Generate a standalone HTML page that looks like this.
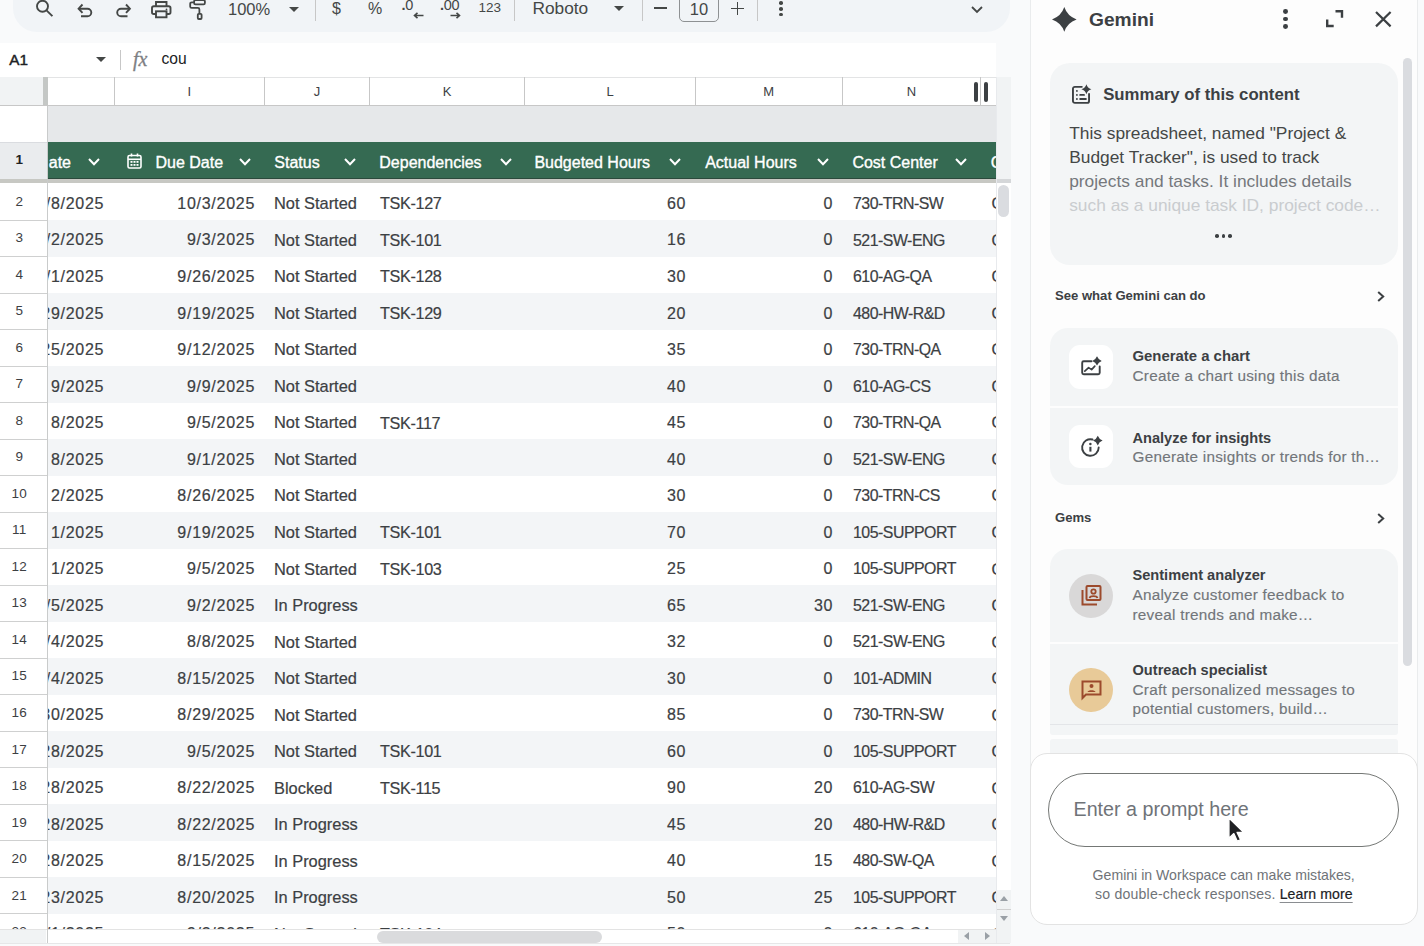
<!DOCTYPE html><html><head><meta charset="utf-8"><style>
*{margin:0;padding:0;box-sizing:border-box}
html,body{width:1424px;height:946px;overflow:hidden;background:#f9fafb;font-family:"Liberation Sans",sans-serif;color:#3c4043}
.a{position:absolute}
.t{position:absolute;white-space:nowrap}
svg{position:absolute;overflow:visible}
</style></head><body><div class="a" style="left:13px;top:-24px;width:997.00px;height:56.00px;border-radius:24px;background:#f1f4f7"></div><svg style="left:30px;top:-2px" width="26" height="22" viewBox="0 0 26 22"><circle cx="12.5" cy="8.3" r="5.5" fill="none" stroke="#444746" stroke-width="1.9"/><path d="M16.5 12.3 L22.4 18.2" stroke="#444746" stroke-width="1.9"/></svg><svg style="left:76px;top:2px" width="20" height="17" viewBox="0 0 20 17"><path d="M3.5 6.7 H11.5 A3.8 3.8 0 0 1 11.5 14.3 H5" fill="none" stroke="#444746" stroke-width="1.9"/><path d="M6.5 2.5 L2.6 6.7 L6.5 10.9" fill="none" stroke="#444746" stroke-width="1.9"/></svg><svg style="left:114px;top:2px" width="20" height="17" viewBox="0 0 20 17"><path d="M15 6.7 H7 A3.8 3.8 0 0 0 7 14.3 H13.5" fill="none" stroke="#444746" stroke-width="1.9"/><path d="M12 2.5 L15.9 6.7 L12 10.9" fill="none" stroke="#444746" stroke-width="1.9"/></svg><svg style="left:150px;top:0px" width="22" height="19" viewBox="0 0 22 19"><path d="M6 6.3 V2 H16.5 V6.3" fill="none" stroke="#444746" stroke-width="1.9"/><rect x="2" y="6.3" width="18.5" height="7.7" rx="1.8" fill="none" stroke="#444746" stroke-width="1.9"/><rect x="6" y="11.3" width="10.5" height="6" fill="#f0f4f9" stroke="#444746" stroke-width="1.9"/><circle cx="16.5" cy="9.3" r="0.9" fill="#444746"/></svg><svg style="left:188px;top:-4px" width="20" height="25" viewBox="0 0 20 25"><rect x="6.1" y="4.2" width="10.8" height="4.2" rx="1.3" fill="none" stroke="#444746" stroke-width="1.8"/><path d="M6.1 6.3 H3.7 A1.5 1.5 0 0 0 2.2 7.8 V10.4 A1.5 1.5 0 0 0 3.7 11.9 H9.9 A1.5 1.5 0 0 1 11.4 13.4 V17.8" fill="none" stroke="#444746" stroke-width="1.8"/><rect x="9.8" y="17.8" width="3.8" height="5.2" rx="1" fill="none" stroke="#444746" stroke-width="1.8"/></svg><div class="t" style="left:228.00px;top:-1.92px;font-size:16.5px;line-height:23px;color:#444746">100%</div><svg style="left:289px;top:6.5px" width="10" height="5" viewBox="0 0 10 5"><path d="M0 0 H10 L5 5z" fill="#444746"/></svg><div class="a" style="left:314.6px;top:0px;width:1.00px;height:21.00px;background:#c7c7c7"></div><div class="a" style="left:513.6px;top:0px;width:1.00px;height:21.00px;background:#c7c7c7"></div><div class="a" style="left:641.6px;top:0px;width:1.00px;height:21.00px;background:#c7c7c7"></div><div class="a" style="left:757.4px;top:0px;width:1.00px;height:21.00px;background:#c7c7c7"></div><div class="t" style="left:332.00px;top:-1.54px;font-size:16px;line-height:22px;color:#444746">$</div><div class="t" style="left:368.00px;top:-1.54px;font-size:16px;line-height:22px;color:#444746">%</div><div class="t" style="left:401.50px;top:-4.82px;font-size:14.5px;line-height:20px;color:#444746;letter-spacing:-0.3px"><b>.</b>0</div><svg style="left:412.5px;top:11.5px" width="11" height="8" viewBox="0 0 11 8"><path d="M10.5 3.5 H1.5 M4.5 0.8 L1.5 3.5 L4.5 6.2" fill="none" stroke="#444746" stroke-width="1.6"/></svg><div class="t" style="left:440.00px;top:-4.82px;font-size:14.5px;line-height:20px;color:#444746;letter-spacing:-0.3px"><b>.</b>00</div><svg style="left:450px;top:11.5px" width="11" height="8" viewBox="0 0 11 8"><path d="M0.5 3.5 H9.5 M6.5 0.8 L9.5 3.5 L6.5 6.2" fill="none" stroke="#444746" stroke-width="1.6"/></svg><div class="t" style="left:478.50px;top:-1.58px;font-size:13.5px;line-height:19px;color:#444746">123</div><div class="t" style="left:532.50px;top:-4.29px;font-size:17.3px;line-height:24px;color:#444746">Roboto</div><svg style="left:614px;top:6px" width="10" height="5" viewBox="0 0 10 5"><path d="M0 0 H10 L5 5z" fill="#444746"/></svg><div class="a" style="left:654px;top:7.3px;width:13.00px;height:1.60px;background:#444746"></div><div class="a" style="left:679px;top:-8px;width:40.00px;height:30.30px;border:1px solid #8e9193;border-radius:5px"></div><div class="t" style="left:679.00px;width:40px;text-align:center;top:-2.22px;font-size:16.5px;line-height:23px;color:#444746">10</div><div class="a" style="left:731px;top:7.5px;width:13.00px;height:1.60px;background:#444746"></div><div class="a" style="left:736.7px;top:2px;width:1.60px;height:12.50px;background:#444746"></div><div class="a" style="left:779.3px;top:1.2px;width:3.6px;height:3.6px;border-radius:50%;background:#444746"></div><div class="a" style="left:779.3px;top:7.000000000000001px;width:3.6px;height:3.6px;border-radius:50%;background:#444746"></div><div class="a" style="left:779.3px;top:12.7px;width:3.6px;height:3.6px;border-radius:50%;background:#444746"></div><svg style="left:971px;top:6px" width="12" height="7" viewBox="0 0 12 7"><path d="M1 1 L6 6 L11 1" fill="none" stroke="#444746" stroke-width="1.8"/></svg><div class="a" style="left:0px;top:43px;width:996.00px;height:34.00px;background:#fff"></div><div class="t" style="left:9.30px;top:49.00px;font-size:15.3px;line-height:21px;color:#202124;-webkit-text-stroke:0.45px #202124">A1</div><svg style="left:96px;top:57px" width="10" height="5" viewBox="0 0 10 5"><path d="M0 0 H10 L5 5z" fill="#444746"/></svg><div class="a" style="left:120px;top:50px;width:1.00px;height:20.00px;background:#c7c7c7"></div><div class="t" style="left:133.00px;top:45.07px;font-size:20px;line-height:28px;color:#7d8084;font-family:'Liberation Serif',serif;font-style:italic;-webkit-text-stroke:0.3px #7d8084">fx</div><div class="t" style="left:161.50px;top:48.39px;font-size:15.6px;line-height:22px;color:#202124">cou</div><div class="a" style="left:0px;top:77px;width:996.00px;height:866.00px;background:#fff"></div><div class="a" style="left:0px;top:76.5px;width:1010.50px;height:1.00px;background:#e3e4e5"></div><div class="a" style="left:0px;top:77px;width:43.00px;height:28.50px;background:#f1f3f4"></div><div class="a" style="left:43px;top:77px;width:4.50px;height:28.50px;background:#c4c7c5"></div><div class="t" style="left:159.20px;width:60px;text-align:center;top:82.50px;font-size:13px;line-height:18px;color:#3c4043">I</div><div class="t" style="left:286.95px;width:60px;text-align:center;top:82.50px;font-size:13px;line-height:18px;color:#3c4043">J</div><div class="t" style="left:417.20px;width:60px;text-align:center;top:82.50px;font-size:13px;line-height:18px;color:#3c4043">K</div><div class="t" style="left:580.05px;width:60px;text-align:center;top:82.50px;font-size:13px;line-height:18px;color:#3c4043">L</div><div class="t" style="left:738.75px;width:60px;text-align:center;top:82.50px;font-size:13px;line-height:18px;color:#3c4043">M</div><div class="t" style="left:881.55px;width:60px;text-align:center;top:82.50px;font-size:13px;line-height:18px;color:#3c4043">N</div><div class="a" style="left:113.5px;top:77px;width:1.00px;height:28.50px;background:#c7c7c7"></div><div class="a" style="left:263.9px;top:77px;width:1.00px;height:28.50px;background:#c7c7c7"></div><div class="a" style="left:369.0px;top:77px;width:1.00px;height:28.50px;background:#c7c7c7"></div><div class="a" style="left:524.4px;top:77px;width:1.00px;height:28.50px;background:#c7c7c7"></div><div class="a" style="left:694.7px;top:77px;width:1.00px;height:28.50px;background:#c7c7c7"></div><div class="a" style="left:841.8px;top:77px;width:1.00px;height:28.50px;background:#c7c7c7"></div><div class="a" style="left:980.3px;top:77px;width:1.00px;height:28.50px;background:#c7c7c7"></div><div class="a" style="left:0px;top:105px;width:996.00px;height:1.00px;background:#c7c7c7"></div><div class="a" style="left:974.3px;top:82px;width:3.80px;height:19.50px;background:#3c4043;border-radius:2px"></div><div class="a" style="left:983.8px;top:82px;width:4.20px;height:19.50px;background:#3c4043;border-radius:2px"></div><div class="a" style="left:47.5px;top:106px;width:948.50px;height:36.30px;background:#e6e8ea"></div><div class="a" style="left:47.5px;top:142.3px;width:948.50px;height:36.10px;background:#356a52"></div><div class="a" style="left:47.5px;top:177.6px;width:948.50px;height:1.40px;background:#2b4a3c"></div><div class="a" style="left:0px;top:179px;width:996.00px;height:4.40px;background:#c7c8c3"></div><div class="a" style="left:0px;top:142.3px;width:47.00px;height:36.70px;background:#eaecee"></div><div class="a" style="left:0px;top:141.8px;width:47.00px;height:1.00px;background:#dadce0"></div><div class="t" style="left:4.30px;width:30px;text-align:center;top:150.32px;font-size:13.5px;line-height:19px;color:#202124;font-weight:bold">1</div><div class="a" style="left:47.5px;top:142.3px;width:948.5px;height:35.3px;overflow:hidden"><div class="t" style="left:-176.50px;width:200px;text-align:right;top:9.56px;font-size:16px;line-height:22px;color:#fff;-webkit-text-stroke:0.35px #fff">ate</div><svg style="left:40.0px;top:16.099999999999994px" width="12" height="8" viewBox="0 0 12 8"><path d="M1 1 L6 6.2 L11 1" fill="none" stroke="#fff" stroke-width="2"/></svg><svg style="left:79.2px;top:11.0px" width="15" height="16" viewBox="0 0 15 16"><rect x="1" y="2.5" width="13" height="12.5" rx="1.5" fill="none" stroke="#fff" stroke-width="1.6"/><path d="M1 6.3h13" stroke="#fff" stroke-width="1.6"/><path d="M4.5 0.5v3M10.5 0.5v3" stroke="#fff" stroke-width="1.6"/><g fill="#fff"><rect x="3.5" y="8" width="2" height="1.8"/><rect x="6.5" y="8" width="2" height="1.8"/><rect x="9.5" y="8" width="2" height="1.8"/><rect x="3.5" y="11" width="2" height="1.8"/><rect x="6.5" y="11" width="2" height="1.8"/><rect x="9.5" y="11" width="2" height="1.8"/></g></svg><div class="t" style="left:108.00px;top:9.56px;font-size:16px;line-height:22px;color:#fff;-webkit-text-stroke:0.35px #fff">Due Date</div><svg style="left:191.1px;top:16.099999999999994px" width="12" height="8" viewBox="0 0 12 8"><path d="M1 1 L6 6.2 L11 1" fill="none" stroke="#fff" stroke-width="2"/></svg><div class="t" style="left:226.80px;top:9.56px;font-size:16px;line-height:22px;color:#fff;-webkit-text-stroke:0.35px #fff">Status</div><svg style="left:296.1px;top:16.099999999999994px" width="12" height="8" viewBox="0 0 12 8"><path d="M1 1 L6 6.2 L11 1" fill="none" stroke="#fff" stroke-width="2"/></svg><div class="t" style="left:331.80px;top:9.56px;font-size:16px;line-height:22px;color:#fff;-webkit-text-stroke:0.35px #fff">Dependencies</div><svg style="left:452.0px;top:16.099999999999994px" width="12" height="8" viewBox="0 0 12 8"><path d="M1 1 L6 6.2 L11 1" fill="none" stroke="#fff" stroke-width="2"/></svg><div class="t" style="left:486.90px;top:9.56px;font-size:16px;line-height:22px;color:#fff;-webkit-text-stroke:0.35px #fff">Budgeted Hours</div><svg style="left:621.5px;top:16.099999999999994px" width="12" height="8" viewBox="0 0 12 8"><path d="M1 1 L6 6.2 L11 1" fill="none" stroke="#fff" stroke-width="2"/></svg><div class="t" style="left:657.70px;top:9.56px;font-size:16px;line-height:22px;color:#fff;-webkit-text-stroke:0.35px #fff">Actual Hours</div><svg style="left:769.0px;top:16.099999999999994px" width="12" height="8" viewBox="0 0 12 8"><path d="M1 1 L6 6.2 L11 1" fill="none" stroke="#fff" stroke-width="2"/></svg><div class="t" style="left:804.90px;top:9.56px;font-size:16px;line-height:22px;color:#fff;-webkit-text-stroke:0.35px #fff">Cost Center</div><svg style="left:907.7px;top:16.099999999999994px" width="12" height="8" viewBox="0 0 12 8"><path d="M1 1 L6 6.2 L11 1" fill="none" stroke="#fff" stroke-width="2"/></svg><div class="t" style="left:943.30px;top:9.56px;font-size:16px;line-height:22px;color:#fff;-webkit-text-stroke:0.35px #fff">Category</div></div><div class="a" style="left:47.5px;top:183.4px;width:948.5px;height:745.6px;overflow:hidden"><div class="a" style="left:0px;top:0.09999999999999432px;width:948.50px;height:36.52px;background:#ffffff"></div><div class="t" style="left:-143.28px;width:200px;text-align:right;top:9.56px;font-size:16px;line-height:22px;color:#3c4043;letter-spacing:0.72px;-webkit-text-stroke:0.2px #3c4043">9/8/2025</div><div class="t" style="left:7.52px;width:200px;text-align:right;top:9.56px;font-size:16px;line-height:22px;color:#3c4043;letter-spacing:0.72px;-webkit-text-stroke:0.2px #3c4043">10/3/2025</div><div class="t" style="left:226.50px;top:8.92px;font-size:16.4px;line-height:23px;color:#3c4043;-webkit-text-stroke:0.2px #3c4043">Not Started</div><div class="t" style="left:332.50px;top:8.99px;font-size:16.2px;line-height:23px;color:#3c4043;-webkit-text-stroke:0.2px #3c4043;letter-spacing:-0.35px">TSK-127</div><div class="t" style="left:438.72px;width:200px;text-align:right;top:9.56px;font-size:16px;line-height:22px;color:#3c4043;letter-spacing:0.72px;-webkit-text-stroke:0.2px #3c4043">60</div><div class="t" style="left:585.72px;width:200px;text-align:right;top:9.56px;font-size:16px;line-height:22px;color:#3c4043;letter-spacing:0.72px;-webkit-text-stroke:0.2px #3c4043">0</div><div class="t" style="left:805.50px;top:9.59px;font-size:15.9px;line-height:22px;color:#3c4043;-webkit-text-stroke:0.2px #3c4043;letter-spacing:-0.5px">730-TRN-SW</div><div class="t" style="left:944.00px;top:8.92px;font-size:16.4px;line-height:23px;color:#3c4043;-webkit-text-stroke:0.2px #3c4043">Ops</div><div class="a" style="left:0px;top:36.620000000000005px;width:948.50px;height:36.52px;background:#f3f5f7"></div><div class="t" style="left:-143.28px;width:200px;text-align:right;top:46.08px;font-size:16px;line-height:22px;color:#3c4043;letter-spacing:0.72px;-webkit-text-stroke:0.2px #3c4043">9/2/2025</div><div class="t" style="left:7.52px;width:200px;text-align:right;top:46.08px;font-size:16px;line-height:22px;color:#3c4043;letter-spacing:0.72px;-webkit-text-stroke:0.2px #3c4043">9/3/2025</div><div class="t" style="left:226.50px;top:45.44px;font-size:16.4px;line-height:23px;color:#3c4043;-webkit-text-stroke:0.2px #3c4043">Not Started</div><div class="t" style="left:332.50px;top:45.51px;font-size:16.2px;line-height:23px;color:#3c4043;-webkit-text-stroke:0.2px #3c4043;letter-spacing:-0.35px">TSK-101</div><div class="t" style="left:438.72px;width:200px;text-align:right;top:46.08px;font-size:16px;line-height:22px;color:#3c4043;letter-spacing:0.72px;-webkit-text-stroke:0.2px #3c4043">16</div><div class="t" style="left:585.72px;width:200px;text-align:right;top:46.08px;font-size:16px;line-height:22px;color:#3c4043;letter-spacing:0.72px;-webkit-text-stroke:0.2px #3c4043">0</div><div class="t" style="left:805.50px;top:46.11px;font-size:15.9px;line-height:22px;color:#3c4043;-webkit-text-stroke:0.2px #3c4043;letter-spacing:-0.5px">521-SW-ENG</div><div class="t" style="left:944.00px;top:45.44px;font-size:16.4px;line-height:23px;color:#3c4043;-webkit-text-stroke:0.2px #3c4043">Ops</div><div class="a" style="left:0px;top:73.14000000000001px;width:948.50px;height:36.52px;background:#ffffff"></div><div class="t" style="left:-143.28px;width:200px;text-align:right;top:82.60px;font-size:16px;line-height:22px;color:#3c4043;letter-spacing:0.72px;-webkit-text-stroke:0.2px #3c4043">9/1/2025</div><div class="t" style="left:7.52px;width:200px;text-align:right;top:82.60px;font-size:16px;line-height:22px;color:#3c4043;letter-spacing:0.72px;-webkit-text-stroke:0.2px #3c4043">9/26/2025</div><div class="t" style="left:226.50px;top:81.96px;font-size:16.4px;line-height:23px;color:#3c4043;-webkit-text-stroke:0.2px #3c4043">Not Started</div><div class="t" style="left:332.50px;top:82.03px;font-size:16.2px;line-height:23px;color:#3c4043;-webkit-text-stroke:0.2px #3c4043;letter-spacing:-0.35px">TSK-128</div><div class="t" style="left:438.72px;width:200px;text-align:right;top:82.60px;font-size:16px;line-height:22px;color:#3c4043;letter-spacing:0.72px;-webkit-text-stroke:0.2px #3c4043">30</div><div class="t" style="left:585.72px;width:200px;text-align:right;top:82.60px;font-size:16px;line-height:22px;color:#3c4043;letter-spacing:0.72px;-webkit-text-stroke:0.2px #3c4043">0</div><div class="t" style="left:805.50px;top:82.63px;font-size:15.9px;line-height:22px;color:#3c4043;-webkit-text-stroke:0.2px #3c4043;letter-spacing:-0.5px">610-AG-QA</div><div class="t" style="left:944.00px;top:81.96px;font-size:16.4px;line-height:23px;color:#3c4043;-webkit-text-stroke:0.2px #3c4043">Ops</div><div class="a" style="left:0px;top:109.66px;width:948.50px;height:36.52px;background:#f3f5f7"></div><div class="t" style="left:-143.28px;width:200px;text-align:right;top:119.12px;font-size:16px;line-height:22px;color:#3c4043;letter-spacing:0.72px;-webkit-text-stroke:0.2px #3c4043">8/29/2025</div><div class="t" style="left:7.52px;width:200px;text-align:right;top:119.12px;font-size:16px;line-height:22px;color:#3c4043;letter-spacing:0.72px;-webkit-text-stroke:0.2px #3c4043">9/19/2025</div><div class="t" style="left:226.50px;top:118.48px;font-size:16.4px;line-height:23px;color:#3c4043;-webkit-text-stroke:0.2px #3c4043">Not Started</div><div class="t" style="left:332.50px;top:118.55px;font-size:16.2px;line-height:23px;color:#3c4043;-webkit-text-stroke:0.2px #3c4043;letter-spacing:-0.35px">TSK-129</div><div class="t" style="left:438.72px;width:200px;text-align:right;top:119.12px;font-size:16px;line-height:22px;color:#3c4043;letter-spacing:0.72px;-webkit-text-stroke:0.2px #3c4043">20</div><div class="t" style="left:585.72px;width:200px;text-align:right;top:119.12px;font-size:16px;line-height:22px;color:#3c4043;letter-spacing:0.72px;-webkit-text-stroke:0.2px #3c4043">0</div><div class="t" style="left:805.50px;top:119.15px;font-size:15.9px;line-height:22px;color:#3c4043;-webkit-text-stroke:0.2px #3c4043;letter-spacing:-0.5px">480-HW-R&amp;D</div><div class="t" style="left:944.00px;top:118.48px;font-size:16.4px;line-height:23px;color:#3c4043;-webkit-text-stroke:0.2px #3c4043">Ops</div><div class="a" style="left:0px;top:146.18000000000004px;width:948.50px;height:36.52px;background:#ffffff"></div><div class="t" style="left:-143.28px;width:200px;text-align:right;top:155.64px;font-size:16px;line-height:22px;color:#3c4043;letter-spacing:0.72px;-webkit-text-stroke:0.2px #3c4043">8/25/2025</div><div class="t" style="left:7.52px;width:200px;text-align:right;top:155.64px;font-size:16px;line-height:22px;color:#3c4043;letter-spacing:0.72px;-webkit-text-stroke:0.2px #3c4043">9/12/2025</div><div class="t" style="left:226.50px;top:155.00px;font-size:16.4px;line-height:23px;color:#3c4043;-webkit-text-stroke:0.2px #3c4043">Not Started</div><div class="t" style="left:438.72px;width:200px;text-align:right;top:155.64px;font-size:16px;line-height:22px;color:#3c4043;letter-spacing:0.72px;-webkit-text-stroke:0.2px #3c4043">35</div><div class="t" style="left:585.72px;width:200px;text-align:right;top:155.64px;font-size:16px;line-height:22px;color:#3c4043;letter-spacing:0.72px;-webkit-text-stroke:0.2px #3c4043">0</div><div class="t" style="left:805.50px;top:155.67px;font-size:15.9px;line-height:22px;color:#3c4043;-webkit-text-stroke:0.2px #3c4043;letter-spacing:-0.5px">730-TRN-QA</div><div class="t" style="left:944.00px;top:155.00px;font-size:16.4px;line-height:23px;color:#3c4043;-webkit-text-stroke:0.2px #3c4043">Ops</div><div class="a" style="left:0px;top:182.70000000000002px;width:948.50px;height:36.52px;background:#f3f5f7"></div><div class="t" style="left:-143.28px;width:200px;text-align:right;top:192.16px;font-size:16px;line-height:22px;color:#3c4043;letter-spacing:0.72px;-webkit-text-stroke:0.2px #3c4043">9/2025</div><div class="t" style="left:7.52px;width:200px;text-align:right;top:192.16px;font-size:16px;line-height:22px;color:#3c4043;letter-spacing:0.72px;-webkit-text-stroke:0.2px #3c4043">9/9/2025</div><div class="t" style="left:226.50px;top:191.52px;font-size:16.4px;line-height:23px;color:#3c4043;-webkit-text-stroke:0.2px #3c4043">Not Started</div><div class="t" style="left:438.72px;width:200px;text-align:right;top:192.16px;font-size:16px;line-height:22px;color:#3c4043;letter-spacing:0.72px;-webkit-text-stroke:0.2px #3c4043">40</div><div class="t" style="left:585.72px;width:200px;text-align:right;top:192.16px;font-size:16px;line-height:22px;color:#3c4043;letter-spacing:0.72px;-webkit-text-stroke:0.2px #3c4043">0</div><div class="t" style="left:805.50px;top:192.19px;font-size:15.9px;line-height:22px;color:#3c4043;-webkit-text-stroke:0.2px #3c4043;letter-spacing:-0.5px">610-AG-CS</div><div class="t" style="left:944.00px;top:191.52px;font-size:16.4px;line-height:23px;color:#3c4043;-webkit-text-stroke:0.2px #3c4043">Ops</div><div class="a" style="left:0px;top:219.22px;width:948.50px;height:36.52px;background:#ffffff"></div><div class="t" style="left:-143.28px;width:200px;text-align:right;top:228.68px;font-size:16px;line-height:22px;color:#3c4043;letter-spacing:0.72px;-webkit-text-stroke:0.2px #3c4043">8/2025</div><div class="t" style="left:7.52px;width:200px;text-align:right;top:228.68px;font-size:16px;line-height:22px;color:#3c4043;letter-spacing:0.72px;-webkit-text-stroke:0.2px #3c4043">9/5/2025</div><div class="t" style="left:226.50px;top:228.04px;font-size:16.4px;line-height:23px;color:#3c4043;-webkit-text-stroke:0.2px #3c4043">Not Started</div><div class="t" style="left:332.50px;top:228.11px;font-size:16.2px;line-height:23px;color:#3c4043;-webkit-text-stroke:0.2px #3c4043;letter-spacing:-0.35px">TSK-117</div><div class="t" style="left:438.72px;width:200px;text-align:right;top:228.68px;font-size:16px;line-height:22px;color:#3c4043;letter-spacing:0.72px;-webkit-text-stroke:0.2px #3c4043">45</div><div class="t" style="left:585.72px;width:200px;text-align:right;top:228.68px;font-size:16px;line-height:22px;color:#3c4043;letter-spacing:0.72px;-webkit-text-stroke:0.2px #3c4043">0</div><div class="t" style="left:805.50px;top:228.71px;font-size:15.9px;line-height:22px;color:#3c4043;-webkit-text-stroke:0.2px #3c4043;letter-spacing:-0.5px">730-TRN-QA</div><div class="t" style="left:944.00px;top:228.04px;font-size:16.4px;line-height:23px;color:#3c4043;-webkit-text-stroke:0.2px #3c4043">Ops</div><div class="a" style="left:0px;top:255.73999999999998px;width:948.50px;height:36.52px;background:#f3f5f7"></div><div class="t" style="left:-143.28px;width:200px;text-align:right;top:265.20px;font-size:16px;line-height:22px;color:#3c4043;letter-spacing:0.72px;-webkit-text-stroke:0.2px #3c4043">8/2025</div><div class="t" style="left:7.52px;width:200px;text-align:right;top:265.20px;font-size:16px;line-height:22px;color:#3c4043;letter-spacing:0.72px;-webkit-text-stroke:0.2px #3c4043">9/1/2025</div><div class="t" style="left:226.50px;top:264.56px;font-size:16.4px;line-height:23px;color:#3c4043;-webkit-text-stroke:0.2px #3c4043">Not Started</div><div class="t" style="left:438.72px;width:200px;text-align:right;top:265.20px;font-size:16px;line-height:22px;color:#3c4043;letter-spacing:0.72px;-webkit-text-stroke:0.2px #3c4043">40</div><div class="t" style="left:585.72px;width:200px;text-align:right;top:265.20px;font-size:16px;line-height:22px;color:#3c4043;letter-spacing:0.72px;-webkit-text-stroke:0.2px #3c4043">0</div><div class="t" style="left:805.50px;top:265.23px;font-size:15.9px;line-height:22px;color:#3c4043;-webkit-text-stroke:0.2px #3c4043;letter-spacing:-0.5px">521-SW-ENG</div><div class="t" style="left:944.00px;top:264.56px;font-size:16.4px;line-height:23px;color:#3c4043;-webkit-text-stroke:0.2px #3c4043">Ops</div><div class="a" style="left:0px;top:292.26px;width:948.50px;height:36.52px;background:#ffffff"></div><div class="t" style="left:-143.28px;width:200px;text-align:right;top:301.72px;font-size:16px;line-height:22px;color:#3c4043;letter-spacing:0.72px;-webkit-text-stroke:0.2px #3c4043">2/2025</div><div class="t" style="left:7.52px;width:200px;text-align:right;top:301.72px;font-size:16px;line-height:22px;color:#3c4043;letter-spacing:0.72px;-webkit-text-stroke:0.2px #3c4043">8/26/2025</div><div class="t" style="left:226.50px;top:301.08px;font-size:16.4px;line-height:23px;color:#3c4043;-webkit-text-stroke:0.2px #3c4043">Not Started</div><div class="t" style="left:438.72px;width:200px;text-align:right;top:301.72px;font-size:16px;line-height:22px;color:#3c4043;letter-spacing:0.72px;-webkit-text-stroke:0.2px #3c4043">30</div><div class="t" style="left:585.72px;width:200px;text-align:right;top:301.72px;font-size:16px;line-height:22px;color:#3c4043;letter-spacing:0.72px;-webkit-text-stroke:0.2px #3c4043">0</div><div class="t" style="left:805.50px;top:301.75px;font-size:15.9px;line-height:22px;color:#3c4043;-webkit-text-stroke:0.2px #3c4043;letter-spacing:-0.5px">730-TRN-CS</div><div class="t" style="left:944.00px;top:301.08px;font-size:16.4px;line-height:23px;color:#3c4043;-webkit-text-stroke:0.2px #3c4043">Ops</div><div class="a" style="left:0px;top:328.7800000000001px;width:948.50px;height:36.52px;background:#f3f5f7"></div><div class="t" style="left:-143.28px;width:200px;text-align:right;top:338.24px;font-size:16px;line-height:22px;color:#3c4043;letter-spacing:0.72px;-webkit-text-stroke:0.2px #3c4043">1/2025</div><div class="t" style="left:7.52px;width:200px;text-align:right;top:338.24px;font-size:16px;line-height:22px;color:#3c4043;letter-spacing:0.72px;-webkit-text-stroke:0.2px #3c4043">9/19/2025</div><div class="t" style="left:226.50px;top:337.60px;font-size:16.4px;line-height:23px;color:#3c4043;-webkit-text-stroke:0.2px #3c4043">Not Started</div><div class="t" style="left:332.50px;top:337.67px;font-size:16.2px;line-height:23px;color:#3c4043;-webkit-text-stroke:0.2px #3c4043;letter-spacing:-0.35px">TSK-101</div><div class="t" style="left:438.72px;width:200px;text-align:right;top:338.24px;font-size:16px;line-height:22px;color:#3c4043;letter-spacing:0.72px;-webkit-text-stroke:0.2px #3c4043">70</div><div class="t" style="left:585.72px;width:200px;text-align:right;top:338.24px;font-size:16px;line-height:22px;color:#3c4043;letter-spacing:0.72px;-webkit-text-stroke:0.2px #3c4043">0</div><div class="t" style="left:805.50px;top:338.27px;font-size:15.9px;line-height:22px;color:#3c4043;-webkit-text-stroke:0.2px #3c4043;letter-spacing:-0.5px">105-SUPPORT</div><div class="t" style="left:944.00px;top:337.60px;font-size:16.4px;line-height:23px;color:#3c4043;-webkit-text-stroke:0.2px #3c4043">Ops</div><div class="a" style="left:0px;top:365.30000000000007px;width:948.50px;height:36.52px;background:#ffffff"></div><div class="t" style="left:-143.28px;width:200px;text-align:right;top:374.76px;font-size:16px;line-height:22px;color:#3c4043;letter-spacing:0.72px;-webkit-text-stroke:0.2px #3c4043">1/2025</div><div class="t" style="left:7.52px;width:200px;text-align:right;top:374.76px;font-size:16px;line-height:22px;color:#3c4043;letter-spacing:0.72px;-webkit-text-stroke:0.2px #3c4043">9/5/2025</div><div class="t" style="left:226.50px;top:374.12px;font-size:16.4px;line-height:23px;color:#3c4043;-webkit-text-stroke:0.2px #3c4043">Not Started</div><div class="t" style="left:332.50px;top:374.19px;font-size:16.2px;line-height:23px;color:#3c4043;-webkit-text-stroke:0.2px #3c4043;letter-spacing:-0.35px">TSK-103</div><div class="t" style="left:438.72px;width:200px;text-align:right;top:374.76px;font-size:16px;line-height:22px;color:#3c4043;letter-spacing:0.72px;-webkit-text-stroke:0.2px #3c4043">25</div><div class="t" style="left:585.72px;width:200px;text-align:right;top:374.76px;font-size:16px;line-height:22px;color:#3c4043;letter-spacing:0.72px;-webkit-text-stroke:0.2px #3c4043">0</div><div class="t" style="left:805.50px;top:374.79px;font-size:15.9px;line-height:22px;color:#3c4043;-webkit-text-stroke:0.2px #3c4043;letter-spacing:-0.5px">105-SUPPORT</div><div class="t" style="left:944.00px;top:374.12px;font-size:16.4px;line-height:23px;color:#3c4043;-webkit-text-stroke:0.2px #3c4043">Ops</div><div class="a" style="left:0px;top:401.82000000000005px;width:948.50px;height:36.52px;background:#f3f5f7"></div><div class="t" style="left:-143.28px;width:200px;text-align:right;top:411.28px;font-size:16px;line-height:22px;color:#3c4043;letter-spacing:0.72px;-webkit-text-stroke:0.2px #3c4043">8/5/2025</div><div class="t" style="left:7.52px;width:200px;text-align:right;top:411.28px;font-size:16px;line-height:22px;color:#3c4043;letter-spacing:0.72px;-webkit-text-stroke:0.2px #3c4043">9/2/2025</div><div class="t" style="left:226.50px;top:410.64px;font-size:16.4px;line-height:23px;color:#3c4043;-webkit-text-stroke:0.2px #3c4043">In Progress</div><div class="t" style="left:438.72px;width:200px;text-align:right;top:411.28px;font-size:16px;line-height:22px;color:#3c4043;letter-spacing:0.72px;-webkit-text-stroke:0.2px #3c4043">65</div><div class="t" style="left:585.72px;width:200px;text-align:right;top:411.28px;font-size:16px;line-height:22px;color:#3c4043;letter-spacing:0.72px;-webkit-text-stroke:0.2px #3c4043">30</div><div class="t" style="left:805.50px;top:411.31px;font-size:15.9px;line-height:22px;color:#3c4043;-webkit-text-stroke:0.2px #3c4043;letter-spacing:-0.5px">521-SW-ENG</div><div class="t" style="left:944.00px;top:410.64px;font-size:16.4px;line-height:23px;color:#3c4043;-webkit-text-stroke:0.2px #3c4043">Ops</div><div class="a" style="left:0px;top:438.34000000000003px;width:948.50px;height:36.52px;background:#ffffff"></div><div class="t" style="left:-143.28px;width:200px;text-align:right;top:447.80px;font-size:16px;line-height:22px;color:#3c4043;letter-spacing:0.72px;-webkit-text-stroke:0.2px #3c4043">8/4/2025</div><div class="t" style="left:7.52px;width:200px;text-align:right;top:447.80px;font-size:16px;line-height:22px;color:#3c4043;letter-spacing:0.72px;-webkit-text-stroke:0.2px #3c4043">8/8/2025</div><div class="t" style="left:226.50px;top:447.16px;font-size:16.4px;line-height:23px;color:#3c4043;-webkit-text-stroke:0.2px #3c4043">Not Started</div><div class="t" style="left:438.72px;width:200px;text-align:right;top:447.80px;font-size:16px;line-height:22px;color:#3c4043;letter-spacing:0.72px;-webkit-text-stroke:0.2px #3c4043">32</div><div class="t" style="left:585.72px;width:200px;text-align:right;top:447.80px;font-size:16px;line-height:22px;color:#3c4043;letter-spacing:0.72px;-webkit-text-stroke:0.2px #3c4043">0</div><div class="t" style="left:805.50px;top:447.83px;font-size:15.9px;line-height:22px;color:#3c4043;-webkit-text-stroke:0.2px #3c4043;letter-spacing:-0.5px">521-SW-ENG</div><div class="t" style="left:944.00px;top:447.16px;font-size:16.4px;line-height:23px;color:#3c4043;-webkit-text-stroke:0.2px #3c4043">Ops</div><div class="a" style="left:0px;top:474.86px;width:948.50px;height:36.52px;background:#f3f5f7"></div><div class="t" style="left:-143.28px;width:200px;text-align:right;top:484.32px;font-size:16px;line-height:22px;color:#3c4043;letter-spacing:0.72px;-webkit-text-stroke:0.2px #3c4043">8/4/2025</div><div class="t" style="left:7.52px;width:200px;text-align:right;top:484.32px;font-size:16px;line-height:22px;color:#3c4043;letter-spacing:0.72px;-webkit-text-stroke:0.2px #3c4043">8/15/2025</div><div class="t" style="left:226.50px;top:483.68px;font-size:16.4px;line-height:23px;color:#3c4043;-webkit-text-stroke:0.2px #3c4043">Not Started</div><div class="t" style="left:438.72px;width:200px;text-align:right;top:484.32px;font-size:16px;line-height:22px;color:#3c4043;letter-spacing:0.72px;-webkit-text-stroke:0.2px #3c4043">30</div><div class="t" style="left:585.72px;width:200px;text-align:right;top:484.32px;font-size:16px;line-height:22px;color:#3c4043;letter-spacing:0.72px;-webkit-text-stroke:0.2px #3c4043">0</div><div class="t" style="left:805.50px;top:484.35px;font-size:15.9px;line-height:22px;color:#3c4043;-webkit-text-stroke:0.2px #3c4043;letter-spacing:-0.5px">101-ADMIN</div><div class="t" style="left:944.00px;top:483.68px;font-size:16.4px;line-height:23px;color:#3c4043;-webkit-text-stroke:0.2px #3c4043">Ops</div><div class="a" style="left:0px;top:511.38px;width:948.50px;height:36.52px;background:#ffffff"></div><div class="t" style="left:-143.28px;width:200px;text-align:right;top:520.84px;font-size:16px;line-height:22px;color:#3c4043;letter-spacing:0.72px;-webkit-text-stroke:0.2px #3c4043">7/30/2025</div><div class="t" style="left:7.52px;width:200px;text-align:right;top:520.84px;font-size:16px;line-height:22px;color:#3c4043;letter-spacing:0.72px;-webkit-text-stroke:0.2px #3c4043">8/29/2025</div><div class="t" style="left:226.50px;top:520.20px;font-size:16.4px;line-height:23px;color:#3c4043;-webkit-text-stroke:0.2px #3c4043">Not Started</div><div class="t" style="left:438.72px;width:200px;text-align:right;top:520.84px;font-size:16px;line-height:22px;color:#3c4043;letter-spacing:0.72px;-webkit-text-stroke:0.2px #3c4043">85</div><div class="t" style="left:585.72px;width:200px;text-align:right;top:520.84px;font-size:16px;line-height:22px;color:#3c4043;letter-spacing:0.72px;-webkit-text-stroke:0.2px #3c4043">0</div><div class="t" style="left:805.50px;top:520.87px;font-size:15.9px;line-height:22px;color:#3c4043;-webkit-text-stroke:0.2px #3c4043;letter-spacing:-0.5px">730-TRN-SW</div><div class="t" style="left:944.00px;top:520.20px;font-size:16.4px;line-height:23px;color:#3c4043;-webkit-text-stroke:0.2px #3c4043">Ops</div><div class="a" style="left:0px;top:547.9000000000001px;width:948.50px;height:36.52px;background:#f3f5f7"></div><div class="t" style="left:-143.28px;width:200px;text-align:right;top:557.36px;font-size:16px;line-height:22px;color:#3c4043;letter-spacing:0.72px;-webkit-text-stroke:0.2px #3c4043">7/28/2025</div><div class="t" style="left:7.52px;width:200px;text-align:right;top:557.36px;font-size:16px;line-height:22px;color:#3c4043;letter-spacing:0.72px;-webkit-text-stroke:0.2px #3c4043">9/5/2025</div><div class="t" style="left:226.50px;top:556.72px;font-size:16.4px;line-height:23px;color:#3c4043;-webkit-text-stroke:0.2px #3c4043">Not Started</div><div class="t" style="left:332.50px;top:556.79px;font-size:16.2px;line-height:23px;color:#3c4043;-webkit-text-stroke:0.2px #3c4043;letter-spacing:-0.35px">TSK-101</div><div class="t" style="left:438.72px;width:200px;text-align:right;top:557.36px;font-size:16px;line-height:22px;color:#3c4043;letter-spacing:0.72px;-webkit-text-stroke:0.2px #3c4043">60</div><div class="t" style="left:585.72px;width:200px;text-align:right;top:557.36px;font-size:16px;line-height:22px;color:#3c4043;letter-spacing:0.72px;-webkit-text-stroke:0.2px #3c4043">0</div><div class="t" style="left:805.50px;top:557.39px;font-size:15.9px;line-height:22px;color:#3c4043;-webkit-text-stroke:0.2px #3c4043;letter-spacing:-0.5px">105-SUPPORT</div><div class="t" style="left:944.00px;top:556.72px;font-size:16.4px;line-height:23px;color:#3c4043;-webkit-text-stroke:0.2px #3c4043">Ops</div><div class="a" style="left:0px;top:584.4200000000001px;width:948.50px;height:36.52px;background:#ffffff"></div><div class="t" style="left:-143.28px;width:200px;text-align:right;top:593.88px;font-size:16px;line-height:22px;color:#3c4043;letter-spacing:0.72px;-webkit-text-stroke:0.2px #3c4043">7/28/2025</div><div class="t" style="left:7.52px;width:200px;text-align:right;top:593.88px;font-size:16px;line-height:22px;color:#3c4043;letter-spacing:0.72px;-webkit-text-stroke:0.2px #3c4043">8/22/2025</div><div class="t" style="left:226.50px;top:593.24px;font-size:16.4px;line-height:23px;color:#3c4043;-webkit-text-stroke:0.2px #3c4043">Blocked</div><div class="t" style="left:332.50px;top:593.31px;font-size:16.2px;line-height:23px;color:#3c4043;-webkit-text-stroke:0.2px #3c4043;letter-spacing:-0.35px">TSK-115</div><div class="t" style="left:438.72px;width:200px;text-align:right;top:593.88px;font-size:16px;line-height:22px;color:#3c4043;letter-spacing:0.72px;-webkit-text-stroke:0.2px #3c4043">90</div><div class="t" style="left:585.72px;width:200px;text-align:right;top:593.88px;font-size:16px;line-height:22px;color:#3c4043;letter-spacing:0.72px;-webkit-text-stroke:0.2px #3c4043">20</div><div class="t" style="left:805.50px;top:593.91px;font-size:15.9px;line-height:22px;color:#3c4043;-webkit-text-stroke:0.2px #3c4043;letter-spacing:-0.5px">610-AG-SW</div><div class="t" style="left:944.00px;top:593.24px;font-size:16.4px;line-height:23px;color:#3c4043;-webkit-text-stroke:0.2px #3c4043">Ops</div><div class="a" style="left:0px;top:620.94px;width:948.50px;height:36.52px;background:#f3f5f7"></div><div class="t" style="left:-143.28px;width:200px;text-align:right;top:630.40px;font-size:16px;line-height:22px;color:#3c4043;letter-spacing:0.72px;-webkit-text-stroke:0.2px #3c4043">7/28/2025</div><div class="t" style="left:7.52px;width:200px;text-align:right;top:630.40px;font-size:16px;line-height:22px;color:#3c4043;letter-spacing:0.72px;-webkit-text-stroke:0.2px #3c4043">8/22/2025</div><div class="t" style="left:226.50px;top:629.76px;font-size:16.4px;line-height:23px;color:#3c4043;-webkit-text-stroke:0.2px #3c4043">In Progress</div><div class="t" style="left:438.72px;width:200px;text-align:right;top:630.40px;font-size:16px;line-height:22px;color:#3c4043;letter-spacing:0.72px;-webkit-text-stroke:0.2px #3c4043">45</div><div class="t" style="left:585.72px;width:200px;text-align:right;top:630.40px;font-size:16px;line-height:22px;color:#3c4043;letter-spacing:0.72px;-webkit-text-stroke:0.2px #3c4043">20</div><div class="t" style="left:805.50px;top:630.43px;font-size:15.9px;line-height:22px;color:#3c4043;-webkit-text-stroke:0.2px #3c4043;letter-spacing:-0.5px">480-HW-R&amp;D</div><div class="t" style="left:944.00px;top:629.76px;font-size:16.4px;line-height:23px;color:#3c4043;-webkit-text-stroke:0.2px #3c4043">Ops</div><div class="a" style="left:0px;top:657.46px;width:948.50px;height:36.52px;background:#ffffff"></div><div class="t" style="left:-143.28px;width:200px;text-align:right;top:666.92px;font-size:16px;line-height:22px;color:#3c4043;letter-spacing:0.72px;-webkit-text-stroke:0.2px #3c4043">7/28/2025</div><div class="t" style="left:7.52px;width:200px;text-align:right;top:666.92px;font-size:16px;line-height:22px;color:#3c4043;letter-spacing:0.72px;-webkit-text-stroke:0.2px #3c4043">8/15/2025</div><div class="t" style="left:226.50px;top:666.28px;font-size:16.4px;line-height:23px;color:#3c4043;-webkit-text-stroke:0.2px #3c4043">In Progress</div><div class="t" style="left:438.72px;width:200px;text-align:right;top:666.92px;font-size:16px;line-height:22px;color:#3c4043;letter-spacing:0.72px;-webkit-text-stroke:0.2px #3c4043">40</div><div class="t" style="left:585.72px;width:200px;text-align:right;top:666.92px;font-size:16px;line-height:22px;color:#3c4043;letter-spacing:0.72px;-webkit-text-stroke:0.2px #3c4043">15</div><div class="t" style="left:805.50px;top:666.95px;font-size:15.9px;line-height:22px;color:#3c4043;-webkit-text-stroke:0.2px #3c4043;letter-spacing:-0.5px">480-SW-QA</div><div class="t" style="left:944.00px;top:666.28px;font-size:16.4px;line-height:23px;color:#3c4043;-webkit-text-stroke:0.2px #3c4043">Ops</div><div class="a" style="left:0px;top:693.9800000000001px;width:948.50px;height:36.52px;background:#f3f5f7"></div><div class="t" style="left:-143.28px;width:200px;text-align:right;top:703.44px;font-size:16px;line-height:22px;color:#3c4043;letter-spacing:0.72px;-webkit-text-stroke:0.2px #3c4043">7/23/2025</div><div class="t" style="left:7.52px;width:200px;text-align:right;top:703.44px;font-size:16px;line-height:22px;color:#3c4043;letter-spacing:0.72px;-webkit-text-stroke:0.2px #3c4043">8/20/2025</div><div class="t" style="left:226.50px;top:702.80px;font-size:16.4px;line-height:23px;color:#3c4043;-webkit-text-stroke:0.2px #3c4043">In Progress</div><div class="t" style="left:438.72px;width:200px;text-align:right;top:703.44px;font-size:16px;line-height:22px;color:#3c4043;letter-spacing:0.72px;-webkit-text-stroke:0.2px #3c4043">50</div><div class="t" style="left:585.72px;width:200px;text-align:right;top:703.44px;font-size:16px;line-height:22px;color:#3c4043;letter-spacing:0.72px;-webkit-text-stroke:0.2px #3c4043">25</div><div class="t" style="left:805.50px;top:703.47px;font-size:15.9px;line-height:22px;color:#3c4043;-webkit-text-stroke:0.2px #3c4043;letter-spacing:-0.5px">105-SUPPORT</div><div class="t" style="left:944.00px;top:702.80px;font-size:16.4px;line-height:23px;color:#3c4043;-webkit-text-stroke:0.2px #3c4043">Ops</div><div class="a" style="left:0px;top:730.5000000000001px;width:948.50px;height:36.52px;background:#ffffff"></div><div class="t" style="left:-143.28px;width:200px;text-align:right;top:739.96px;font-size:16px;line-height:22px;color:#3c4043;letter-spacing:0.72px;-webkit-text-stroke:0.2px #3c4043">8/1/2025</div><div class="t" style="left:7.52px;width:200px;text-align:right;top:739.96px;font-size:16px;line-height:22px;color:#3c4043;letter-spacing:0.72px;-webkit-text-stroke:0.2px #3c4043">9/3/2025</div><div class="t" style="left:226.50px;top:739.32px;font-size:16.4px;line-height:23px;color:#3c4043;-webkit-text-stroke:0.2px #3c4043">Not Started</div><div class="t" style="left:332.50px;top:739.39px;font-size:16.2px;line-height:23px;color:#3c4043;-webkit-text-stroke:0.2px #3c4043;letter-spacing:-0.35px">TSK-104</div><div class="t" style="left:438.72px;width:200px;text-align:right;top:739.96px;font-size:16px;line-height:22px;color:#3c4043;letter-spacing:0.72px;-webkit-text-stroke:0.2px #3c4043">50</div><div class="t" style="left:585.72px;width:200px;text-align:right;top:739.96px;font-size:16px;line-height:22px;color:#3c4043;letter-spacing:0.72px;-webkit-text-stroke:0.2px #3c4043">0</div><div class="t" style="left:805.50px;top:739.99px;font-size:15.9px;line-height:22px;color:#3c4043;-webkit-text-stroke:0.2px #3c4043;letter-spacing:-0.5px">610-AG-QA</div><div class="t" style="left:944.00px;top:739.32px;font-size:16.4px;line-height:23px;color:#3c4043;-webkit-text-stroke:0.2px #3c4043">Ops</div></div><div class="a" style="left:0;top:183.4px;width:47px;height:745.6px;overflow:hidden;background:#fff"><div class="t" style="left:0.30px;width:38px;text-align:center;top:8.32px;font-size:13.5px;line-height:19px;color:#3c4043;letter-spacing:0.3px">2</div><div class="a" style="left:0px;top:36.12px;width:47.00px;height:1.00px;background:#cfd0d0"></div><div class="t" style="left:0.30px;width:38px;text-align:center;top:44.84px;font-size:13.5px;line-height:19px;color:#3c4043;letter-spacing:0.3px">3</div><div class="a" style="left:0px;top:72.64000000000001px;width:47.00px;height:1.00px;background:#cfd0d0"></div><div class="t" style="left:0.30px;width:38px;text-align:center;top:81.36px;font-size:13.5px;line-height:19px;color:#3c4043;letter-spacing:0.3px">4</div><div class="a" style="left:0px;top:109.16000000000003px;width:47.00px;height:1.00px;background:#cfd0d0"></div><div class="t" style="left:0.30px;width:38px;text-align:center;top:117.88px;font-size:13.5px;line-height:19px;color:#3c4043;letter-spacing:0.3px">5</div><div class="a" style="left:0px;top:145.68px;width:47.00px;height:1.00px;background:#cfd0d0"></div><div class="t" style="left:0.30px;width:38px;text-align:center;top:154.40px;font-size:13.5px;line-height:19px;color:#3c4043;letter-spacing:0.3px">6</div><div class="a" style="left:0px;top:182.20000000000005px;width:47.00px;height:1.00px;background:#cfd0d0"></div><div class="t" style="left:0.30px;width:38px;text-align:center;top:190.92px;font-size:13.5px;line-height:19px;color:#3c4043;letter-spacing:0.3px">7</div><div class="a" style="left:0px;top:218.72000000000003px;width:47.00px;height:1.00px;background:#cfd0d0"></div><div class="t" style="left:0.30px;width:38px;text-align:center;top:227.44px;font-size:13.5px;line-height:19px;color:#3c4043;letter-spacing:0.3px">8</div><div class="a" style="left:0px;top:255.24px;width:47.00px;height:1.00px;background:#cfd0d0"></div><div class="t" style="left:0.30px;width:38px;text-align:center;top:263.96px;font-size:13.5px;line-height:19px;color:#3c4043;letter-spacing:0.3px">9</div><div class="a" style="left:0px;top:291.76px;width:47.00px;height:1.00px;background:#cfd0d0"></div><div class="t" style="left:0.30px;width:38px;text-align:center;top:300.48px;font-size:13.5px;line-height:19px;color:#3c4043;letter-spacing:0.3px">10</div><div class="a" style="left:0px;top:328.28px;width:47.00px;height:1.00px;background:#cfd0d0"></div><div class="t" style="left:0.30px;width:38px;text-align:center;top:337.00px;font-size:13.5px;line-height:19px;color:#3c4043;letter-spacing:0.3px">11</div><div class="a" style="left:0px;top:364.80000000000007px;width:47.00px;height:1.00px;background:#cfd0d0"></div><div class="t" style="left:0.30px;width:38px;text-align:center;top:373.52px;font-size:13.5px;line-height:19px;color:#3c4043;letter-spacing:0.3px">12</div><div class="a" style="left:0px;top:401.32000000000005px;width:47.00px;height:1.00px;background:#cfd0d0"></div><div class="t" style="left:0.30px;width:38px;text-align:center;top:410.04px;font-size:13.5px;line-height:19px;color:#3c4043;letter-spacing:0.3px">13</div><div class="a" style="left:0px;top:437.84000000000003px;width:47.00px;height:1.00px;background:#cfd0d0"></div><div class="t" style="left:0.30px;width:38px;text-align:center;top:446.56px;font-size:13.5px;line-height:19px;color:#3c4043;letter-spacing:0.3px">14</div><div class="a" style="left:0px;top:474.36px;width:47.00px;height:1.00px;background:#cfd0d0"></div><div class="t" style="left:0.30px;width:38px;text-align:center;top:483.08px;font-size:13.5px;line-height:19px;color:#3c4043;letter-spacing:0.3px">15</div><div class="a" style="left:0px;top:510.88px;width:47.00px;height:1.00px;background:#cfd0d0"></div><div class="t" style="left:0.30px;width:38px;text-align:center;top:519.60px;font-size:13.5px;line-height:19px;color:#3c4043;letter-spacing:0.3px">16</div><div class="a" style="left:0px;top:547.4px;width:47.00px;height:1.00px;background:#cfd0d0"></div><div class="t" style="left:0.30px;width:38px;text-align:center;top:556.12px;font-size:13.5px;line-height:19px;color:#3c4043;letter-spacing:0.3px">17</div><div class="a" style="left:0px;top:583.9200000000001px;width:47.00px;height:1.00px;background:#cfd0d0"></div><div class="t" style="left:0.30px;width:38px;text-align:center;top:592.64px;font-size:13.5px;line-height:19px;color:#3c4043;letter-spacing:0.3px">18</div><div class="a" style="left:0px;top:620.44px;width:47.00px;height:1.00px;background:#cfd0d0"></div><div class="t" style="left:0.30px;width:38px;text-align:center;top:629.16px;font-size:13.5px;line-height:19px;color:#3c4043;letter-spacing:0.3px">19</div><div class="a" style="left:0px;top:656.96px;width:47.00px;height:1.00px;background:#cfd0d0"></div><div class="t" style="left:0.30px;width:38px;text-align:center;top:665.68px;font-size:13.5px;line-height:19px;color:#3c4043;letter-spacing:0.3px">20</div><div class="a" style="left:0px;top:693.48px;width:47.00px;height:1.00px;background:#cfd0d0"></div><div class="t" style="left:0.30px;width:38px;text-align:center;top:702.20px;font-size:13.5px;line-height:19px;color:#3c4043;letter-spacing:0.3px">21</div><div class="a" style="left:0px;top:730.0000000000001px;width:47.00px;height:1.00px;background:#cfd0d0"></div><div class="t" style="left:0.30px;width:38px;text-align:center;top:738.72px;font-size:13.5px;line-height:19px;color:#3c4043;letter-spacing:0.3px">22</div><div class="a" style="left:0px;top:766.5200000000001px;width:47.00px;height:1.00px;background:#cfd0d0"></div></div><div class="a" style="left:46.6px;top:106px;width:1.20px;height:837.00px;background:#c9cbcb"></div><div class="a" style="left:0px;top:929px;width:996.00px;height:14.00px;background:#fff"></div><div class="a" style="left:0px;top:928.5px;width:996.00px;height:1.00px;background:#e3e3e3"></div><div class="a" style="left:0px;top:929.5px;width:46.30px;height:13.50px;background:#f1f3f4"></div><div class="a" style="left:377.3px;top:930.6px;width:224.60px;height:12.00px;border-radius:6px;background:#dadbdd"></div><div class="a" style="left:958.2px;top:929.5px;width:37.80px;height:13.50px;background:#f1f3f4"></div><div class="a" style="left:46.6px;top:929px;width:1.20px;height:14.00px;background:#c9cbcb"></div><div class="a" style="left:0px;top:942.5px;width:1010.00px;height:1.00px;background:#e6e7e8"></div><svg style="left:964px;top:932px" width="6" height="8" viewBox="0 0 6 8"><path d="M5 0 V8 L0 4z" fill="#9aa0a6"/></svg><svg style="left:985px;top:932px" width="6" height="8" viewBox="0 0 6 8"><path d="M0 0 V8 L5 4z" fill="#9aa0a6"/></svg><div class="a" style="left:996px;top:77px;width:14.50px;height:102.00px;background:#f1f3f4"></div><div class="a" style="left:996px;top:179px;width:14.50px;height:4.40px;background:#d5d7d9"></div><div class="a" style="left:996px;top:183.4px;width:14.50px;height:759.60px;background:#fff"></div><div class="a" style="left:996px;top:77px;width:1.00px;height:866.00px;background:#e8eaed"></div><div class="a" style="left:998px;top:184.8px;width:11.00px;height:32.30px;border-radius:6px;background:#dadce0"></div><div class="a" style="left:997px;top:890px;width:13.50px;height:53.00px;background:#f1f3f4"></div><div class="a" style="left:997px;top:909px;width:13.50px;height:1.00px;background:#d0d0d0"></div><svg style="left:999.5px;top:896px" width="8" height="5" viewBox="0 0 8 5"><path d="M0 5 H8 L4 0z" fill="#9aa0a6"/></svg><svg style="left:999.5px;top:916px" width="8" height="5" viewBox="0 0 8 5"><path d="M0 0 H8 L4 5z" fill="#9aa0a6"/></svg><div class="a" style="left:1030px;top:-30px;width:388.00px;height:955.00px;background:#fdfdfd;border:1px solid #eaeced;border-radius:0 0 20px 20px"></div><svg style="left:1052.2px;top:7.2px" width="24.6" height="24.8" viewBox="0 0 24 24"><path d="M12 0 Q15 9 24 12 Q15 15 12 24 Q9 15 0 12 Q9 9 12 0z" fill="#3c4043"/></svg><div class="t" style="left:1089.00px;top:5.75px;font-size:19.2px;line-height:27px;color:#3c4043;font-weight:bold">Gemini</div><div class="a" style="left:1283.1px;top:9.2px;width:4.8px;height:4.8px;border-radius:50%;background:#3c4043"></div><div class="a" style="left:1283.1px;top:16.700000000000003px;width:4.8px;height:4.8px;border-radius:50%;background:#3c4043"></div><div class="a" style="left:1283.1px;top:24.1px;width:4.8px;height:4.8px;border-radius:50%;background:#3c4043"></div><svg style="left:1326px;top:10.3px" width="17.2" height="17.2" viewBox="0 0 17.2 17.2"><path d="M9.5 1.2 H16 V7.7 M1.2 9.5 V16 H7.7" fill="none" stroke="#3c4043" stroke-width="2.4"/></svg><svg style="left:1374.6px;top:11px" width="16.6" height="16.4" viewBox="0 0 16.6 16.4"><path d="M1 1 L15.6 15.4 M15.6 1 L1 15.4" fill="none" stroke="#3c4043" stroke-width="2.2"/></svg><div class="a" style="left:1050.4px;top:63px;width:347.50px;height:201.80px;background:#f3f5f6;border-radius:20px"></div><svg style="left:1070px;top:84px" width="24" height="24" viewBox="0 0 24 24"><path d="M11.8 2.85 H4.85 A1.9 1.9 0 0 0 2.95 4.75 V16.95 A1.9 1.9 0 0 0 4.85 18.85 H17.15 A1.9 1.9 0 0 0 19.05 16.95 V10" fill="none" stroke="#3c4043" stroke-width="1.9" stroke-linecap="round"/><path d="M6.9 6.9 h0.01 M6.9 10.9 h0.01 M6.9 15 h0.01 M10.2 10.9 H14 M10.2 15 H15.9" stroke="#3c4043" stroke-width="1.9" stroke-linecap="round"/><path d="M16.4 0.34999999999999964 Q17.5 4.25 21.4 5.35 Q17.5 6.449999999999999 16.4 10.35 Q15.299999999999999 6.449999999999999 11.399999999999999 5.35 Q15.299999999999999 4.25 16.4 0.34999999999999964z" fill="#3c4043"/></svg><div class="t" style="left:1103.20px;top:83.10px;font-size:16.75px;line-height:23px;color:#3c4043;font-weight:bold">Summary of this content</div><div class="t" style="left:1069.20px;top:120.99px;font-size:17.35px;line-height:24px;color:#444746">This spreadsheet, named "Project &amp;</div><div class="t" style="left:1069.20px;top:144.79px;font-size:17.35px;line-height:24px;color:#444746">Budget Tracker", is used to track</div><div class="t" style="left:1069.20px;top:169.19px;font-size:17.35px;line-height:24px;color:#75787c">projects and tasks. It includes details</div><div class="t" style="left:1069.20px;top:192.79px;font-size:17.35px;line-height:24px;color:#c9cccf">such as a unique task ID, project code&#8230;</div><div class="a" style="left:1215.0px;top:234.0px;width:3.6px;height:3.6px;border-radius:50%;background:#3c4043"></div><div class="a" style="left:1221.6000000000001px;top:234.0px;width:3.6px;height:3.6px;border-radius:50%;background:#3c4043"></div><div class="a" style="left:1228.2px;top:234.0px;width:3.6px;height:3.6px;border-radius:50%;background:#3c4043"></div><div class="t" style="left:1055.00px;top:287.26px;font-size:13.1px;line-height:18px;color:#3c4043;font-weight:bold">See what Gemini can do</div><svg style="left:1376.8px;top:291.3px" width="8" height="11" viewBox="0 0 8 11"><path d="M1.2 1 L6.2 5.5 L1.2 10" fill="none" stroke="#3c4043" stroke-width="2"/></svg><div class="a" style="left:1050.1px;top:328.1px;width:347.60px;height:77.60px;background:#f3f5f6;border-radius:18px 18px 0 0"></div><div class="a" style="left:1050.1px;top:407.8px;width:347.60px;height:77.50px;background:#f3f5f6;border-radius:0 0 18px 18px"></div><div class="a" style="left:1069px;top:344.6px;width:43.80px;height:44.20px;background:#fff;border-radius:11px"></div><div class="a" style="left:1069px;top:424.7px;width:43.80px;height:43.70px;background:#fff;border-radius:11px"></div><svg style="left:1080px;top:355px" width="24" height="24" viewBox="0 0 24 24"><path d="M11.5 6.2 H3.7 A1.5 1.5 0 0 0 2.2 7.7 V17.8 A1.5 1.5 0 0 0 3.7 19.3 H18.2 A1.5 1.5 0 0 0 19.7 17.8 V11.5" fill="none" stroke="#3c4043" stroke-width="1.9" stroke-linecap="round"/><path d="M4.8 16.2 L8.6 12.6 L11.6 14.6 L14.8 11.2" fill="none" stroke="#3c4043" stroke-width="1.7" stroke-linecap="round" stroke-linejoin="round"/><path d="M17 1.2000000000000002 Q18.316 4.584 21.7 5.9 Q18.316 7.216000000000001 17 10.600000000000001 Q15.684 7.216000000000001 12.3 5.9 Q15.684 4.584 17 1.2000000000000002z" fill="#3c4043"/></svg><svg style="left:1080px;top:436px" width="24" height="24" viewBox="0 0 24 24"><path d="M12.55 3.5 A8.3 8.3 0 1 0 18.7 11.5" fill="none" stroke="#3c4043" stroke-width="1.9" stroke-linecap="round"/><circle cx="10.4" cy="8.1" r="1.25" fill="#3c4043"/><path d="M10.4 10.8 V15.6" stroke="#3c4043" stroke-width="2.1"/><path d="M17.8 -0.20000000000000018 Q19.144000000000002 3.2559999999999993 22.6 4.6 Q19.144000000000002 5.944 17.8 9.399999999999999 Q16.456 5.944 13.0 4.6 Q16.456 3.2559999999999993 17.8 -0.20000000000000018z" fill="#3c4043"/></svg><div class="t" style="left:1132.50px;top:346.34px;font-size:14.9px;line-height:21px;color:#3c4043;font-weight:bold">Generate a chart</div><div class="t" style="left:1132.50px;top:365.30px;font-size:15.3px;line-height:21px;color:#72767a;letter-spacing:0.25px;-webkit-text-stroke:0.15px #72767a">Create a chart using this data</div><div class="t" style="left:1132.50px;top:427.74px;font-size:14.6px;line-height:20px;color:#3c4043;font-weight:bold">Analyze for insights</div><div class="t" style="left:1132.50px;top:445.60px;font-size:15.3px;line-height:21px;color:#72767a;letter-spacing:0.25px;-webkit-text-stroke:0.15px #72767a">Generate insights or trends for th&#8230;</div><div class="t" style="left:1055.00px;top:508.56px;font-size:13.1px;line-height:18px;color:#3c4043;font-weight:bold">Gems</div><svg style="left:1376.8px;top:512.8px" width="8" height="11" viewBox="0 0 8 11"><path d="M1.2 1 L6.2 5.5 L1.2 10" fill="none" stroke="#3c4043" stroke-width="2"/></svg><div class="a" style="left:1050.2px;top:549px;width:347.80px;height:92.60px;background:#f3f5f6;border-radius:18px 18px 0 0"></div><div class="a" style="left:1050.2px;top:644.1px;width:347.80px;height:80.30px;background:#f3f5f6"></div><div class="a" style="left:1050.2px;top:724.4px;width:347.80px;height:1.00px;background:#e3e5e8"></div><div class="a" style="left:1050.2px;top:725.4px;width:347.80px;height:10.10px;background:#f3f5f6;border-radius:0 0 3px 3px"></div><div class="a" style="left:1050.2px;top:739px;width:347.80px;height:21.00px;background:#f3f5f6;border-radius:3px 3px 0 0"></div><div class="a" style="left:1069.1px;top:573.6px;width:43.80px;height:44.10px;background:#d9d8d8;border-radius:50%"></div><div class="a" style="left:1069.1px;top:667.7px;width:43.80px;height:44.40px;background:#e8ca98;border-radius:50%"></div><svg style="left:1081px;top:585px" width="21" height="21" viewBox="0 0 21 21"><rect x="5.5" y="1" width="14" height="14" rx="1" fill="none" stroke="#9c4a2c" stroke-width="2"/><path d="M1.5 5 V19.5 H16" fill="none" stroke="#9c4a2c" stroke-width="2"/><circle cx="12.5" cy="6.5" r="2.2" fill="none" stroke="#9c4a2c" stroke-width="1.8"/><path d="M8.5 13 C9.5 10.5 15.5 10.5 16.5 13" fill="none" stroke="#9c4a2c" stroke-width="1.8"/></svg><svg style="left:1081px;top:680px" width="21" height="20" viewBox="0 0 21 20"><path d="M1.5 1.5 H19.5 V14.5 H5 L1.5 18z" fill="none" stroke="#9c4a2c" stroke-width="2"/><circle cx="10.5" cy="6" r="2" fill="#9c4a2c"/><path d="M6.5 12 C7 9.5 14 9.5 14.5 12z" fill="#9c4a2c"/></svg><div class="t" style="left:1132.50px;top:565.24px;font-size:14.6px;line-height:20px;color:#3c4043;font-weight:bold">Sentiment analyzer</div><div class="t" style="left:1132.50px;top:584.40px;font-size:15.3px;line-height:21px;color:#72767a;letter-spacing:0.25px;-webkit-text-stroke:0.15px #72767a">Analyze customer feedback to</div><div class="t" style="left:1132.50px;top:603.80px;font-size:15.3px;line-height:21px;color:#72767a;letter-spacing:0.25px;-webkit-text-stroke:0.15px #72767a">reveal trends and make&#8230;</div><div class="t" style="left:1132.50px;top:659.64px;font-size:14.6px;line-height:20px;color:#3c4043;font-weight:bold">Outreach specialist</div><div class="t" style="left:1132.50px;top:678.80px;font-size:15.3px;line-height:21px;color:#72767a;letter-spacing:0.25px;-webkit-text-stroke:0.15px #72767a">Craft personalized messages to</div><div class="t" style="left:1132.50px;top:697.80px;font-size:15.3px;line-height:21px;color:#72767a;letter-spacing:0.25px;-webkit-text-stroke:0.15px #72767a">potential customers, build&#8230;</div><div class="a" style="left:1403.2px;top:58.1px;width:8.80px;height:608.00px;background:#dadce0;border-radius:5px"></div><div class="a" style="left:1030px;top:753px;width:388.00px;height:172.00px;background:#fff;border:1px solid #e3e3e3;border-radius:17px"></div><div class="a" style="left:1048.4px;top:773.2px;width:350.30px;height:74.00px;border:1.2px solid #747775;border-radius:37px"></div><div class="t" style="left:1073.50px;top:795.17px;font-size:19.7px;line-height:28px;color:#6f7378">Enter a prompt here</div><svg style="left:1227px;top:817px" width="18" height="26" viewBox="0 0 16 24"><path d="M1.5 1 V19.5 L6 15.3 L9.2 22.3 L12.2 21 L9 14.2 H15z" fill="#202124" stroke="#fff" stroke-width="1.2" stroke-linejoin="round"/></svg><div class="t" style="left:1033.70px;width:380px;text-align:center;top:864.71px;font-size:14.1px;line-height:20px;color:#6f7378">Gemini in Workspace can make mistakes,</div><div class="t" style="left:1095.00px;top:884.01px;font-size:14.1px;line-height:20px;color:#6f7378"><span style="letter-spacing:0.2px">so double-check responses.</span> <span style="color:#202124;-webkit-text-stroke:0.2px #202124;letter-spacing:0.1px;text-decoration:underline;text-underline-offset:3px;text-decoration-color:#8a8d91">Learn more</span></div></body></html>
